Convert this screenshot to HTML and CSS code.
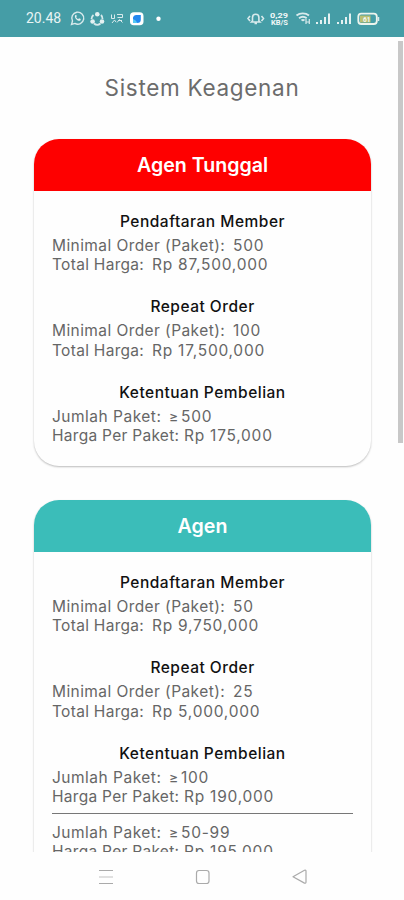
FILE: index.html
```html
<!DOCTYPE html>
<html lang="id">
<head>
<meta charset="utf-8">
<meta name="viewport" content="width=device-width, initial-scale=1">
<title>Sistem Keagenan</title>
<link rel="stylesheet" href="styles.css">
</head>
<body>
<header class="status">
  <span class="clock">20.48</span>
  <svg class="status-icons" width="337" height="36" viewBox="67 0 337 36" fill="none" stroke="#d8eaec" stroke-width="1.4">
    <path d="M71.5 24.5l1-3.5a6 6 0 1 1 2.4 2.4z"/>
    <path d="M75.2 15.2c-1.5 2 2.5 6.8 5.2 5.4l.4-1.6-1.8-.8-.9 1c-1-.5-1.6-1.2-2-2.1l.8-.8-.8-1.6z" fill="#e4f1f2" stroke="none"/>
    <path d="M93.500 15a5 5 0 0 0-2 4M101 15a5 5 0 0 1 1.500 4M94 23.500a5 5 0 0 0 6.500 0" stroke-width="1.800"/>
    <g fill="#e4f1f2" stroke="none"><circle cx="97.300" cy="14.300" r="2.300"/><circle cx="92.600" cy="21.500" r="2.300"/><circle cx="102" cy="21.500" r="2.300"/></g>
    <path d="M111.500 14.500v4h3v-4M112 23l2.500-3 1.500 2M117 14.500h5.500v3h-5M117 22.500l2.500-3 3 3M118 20.500h4" stroke-width="1"/>
    <rect x="130" y="12.200" width="13.500" height="13" rx="3.800" fill="#fff" stroke="none"/>
    <path d="M133 17.500a3 3 0 0 1 3-2.500h4.800v4.500a3.500 3.500 0 0 1-3.500 3.500H133z" fill="#2387ef" stroke="none"/>
    <path d="M133 23v-4a8 8 0 0 1 4.500 4z" fill="#55c8f5" stroke="none"/>
    <circle cx="158.500" cy="18.700" r="2.200" fill="#fff" stroke="none"/>
    <path d="M252.500 21v-3.500a3.200 3.200 0 0 1 6.400 0V21l1 1h-8.400zM254.500 23.500h2.500M250 16l-2 2.500 2 2.500M261.500 16l2 2.500-2 2.500" stroke-width="1.600"/>
    <path d="M296.500 15.500c3.500-2.800 9-2.800 12.500 0M299 18.200c2.200-1.700 5.500-1.700 7.700 0M301.500 20.600c1-.8 2-.8 3 0" stroke-width="1.900"/>
    <path d="M306 24v-5M309.300 24v-5M306 22h3" stroke-width="1.200"/>
    <g fill="#e4f1f2" stroke="none"><path d="M316 22h2v2h-2zM320 20h2v4h-2zM324 17h2v7h-2zM328 13.500h2V24h-2zM337 22h2v2h-2zM341 20h2v4h-2zM345 17h2v7h-2zM349 13.500h2V24h-2z"/></g>
    <rect x="358.300" y="13.700" width="18.500" height="10.300" rx="3" stroke="#edf4ed" stroke-width="1.800"/>
    <path d="M360 15.500h10.500v7H360z" fill="#b9bf72" stroke="none"/>
    <path d="M378.500 17v4" stroke-width="1.500"/>
    <g class="tiny" fill="#f2f8f8" stroke="none"><text x="270" y="17.500" textLength="18" lengthAdjust="spacingAndGlyphs">0,29</text><text x="271" y="25" textLength="17" lengthAdjust="spacingAndGlyphs">KB/S</text><text x="363" y="21.500">61</text></g>
  </svg>
</header>
<main class="view">
  <div class="scrollbar"></div>
  <h1>Sistem Keagenan</h1>
  <article class="card">
    <h2 class="red">Agen Tunggal</h2>
    <div class="body">
      <section><h3>Pendaftaran Member</h3>
        <p><span class="order">Minimal Order (Paket):</span><b>500</b></p>
        <p><span class="total">Total Harga:</span><b>Rp 87,500,000</b></p></section>
      <section><h3>Repeat Order</h3>
        <p><span class="order">Minimal Order (Paket):</span><b>100</b></p>
        <p><span class="total">Total Harga:</span><b>Rp 17,500,000</b></p></section>
      <section><h3>Ketentuan Pembelian</h3>
        <p><span class="count">Jumlah Paket:</span><i>≥</i><b>500</b></p>
        <p><span class="price">Harga Per Paket:</span><b>Rp 175,000</b></p></section>
    </div>
  </article>
  <article class="card">
    <h2 class="teal">Agen</h2>
    <div class="body">
      <section><h3>Pendaftaran Member</h3>
        <p><span class="order">Minimal Order (Paket):</span><b>50</b></p>
        <p><span class="total">Total Harga:</span><b>Rp 9,750,000</b></p></section>
      <section><h3>Repeat Order</h3>
        <p><span class="order">Minimal Order (Paket):</span><b>25</b></p>
        <p><span class="total">Total Harga:</span><b>Rp 5,000,000</b></p></section>
      <section><h3>Ketentuan Pembelian</h3>
        <p><span class="count">Jumlah Paket:</span><i>≥</i><b>100</b></p>
        <p><span class="price">Harga Per Paket:</span><b>Rp 190,000</b></p>
        <hr>
        <p><span class="count">Jumlah Paket:</span><i>≥</i><b>50-99</b></p>
        <p><span class="price">Harga Per Paket:</span><b>Rp 195,000</b></p></section>
    </div>
  </article>
</main>
<nav class="nav">
  <svg width="404" height="49" viewBox="0 851 404 49" fill="none" stroke="#aaa" stroke-width="1.200">
    <path d="M99 869.500h14M99 882.500h14"/><path d="M99 876h14" stroke="#ccc"/>
    <rect x="196.500" y="869.500" width="12.500" height="13" rx="2.500"/>
    <path d="M293 875.800l11.500-6.500q1.500-.5 1.500 1v10.800q0 1.500-1.500 1z" stroke-linejoin="round"/>
  </svg>
</nav>
</body>
</html>
```
FILE: styles.css
```css
* { box-sizing: border-box; }
body {
  margin: 0;
  height: 900px;
  overflow: hidden;
  display: flex;
  flex-direction: column;
  background: #fefefe;
  font-family: Inter, "Liberation Sans", sans-serif;
}
.status {
  flex: 0 0 36px;
  display: flex;
  background: #459da6;
  color: #e8f4f4;
}
.clock {
  width: 67px;
  padding-left: 26px;
  font: 14px/37px Roboto, sans-serif;
}
.status-icons { display: block; }
.tiny { font: bold 6.5px Roboto, sans-serif; }
.view {
  flex: 0 0 815px;
  position: relative;
  overflow: hidden;
}
.scrollbar {
  position: absolute;
  top: 4px;
  right: 1px;
  width: 5px;
  height: 402px;
  background: #c8c8c8;
}
h1, h2, h3, p { margin: 0; white-space: nowrap; }
h1 {
  padding-top: 35px;
  height: 102px;
  text-align: center;
  font-size: 22.5px;
  line-height: 32px;
  font-weight: 400;
  color: #6c6c6c;
  letter-spacing: 0.7px;
}
.card {
  width: 337px;
  height: 327px;
  margin: 0 0 34px 34px;
  border-radius: 25px;
  overflow: hidden;
  box-shadow: 0 1px 2px #bbb;
  background: #fefefe;
}
.card:last-child { height: 420px; }
h2 {
  height: 52px;
  text-align: center;
  font-size: 19.6px;
  line-height: 52px;
  font-weight: 600;
  color: #fff;
}
.red { background: #fe0000; }
.teal { background: #3bbdb9; }
.body { padding: 17.5px 18px 0; }
section { height: 85.5px; }
h3 {
  height: 27px;
  line-height: 26px;
  text-align: center;
  font-size: 15.5px;
  font-weight: 500;
  letter-spacing: 0.5px;
  color: #111;
}
p {
  display: flex;
  height: 19.5px;
  line-height: 19.5px;
  font-size: 15.5px;
  color: #666;
}
p b { font-weight: 400; letter-spacing: 0.75px; }
p i { width: 12px; font-style: normal; font-size: 14px; }
.order { width: 181px; letter-spacing: 0.42px; }
.total { width: 100px; letter-spacing: 0.3px; }
.count { width: 117px; letter-spacing: 0.5px; }
.price { width: 132px; letter-spacing: 0.28px; }
hr {
  margin: 6px 0 9px;
  border: 0;
  height: 1px;
  background: #777;
}
.nav { flex: 0 0 49px; background: #fefefe; }
.nav svg { display: block; }
```
